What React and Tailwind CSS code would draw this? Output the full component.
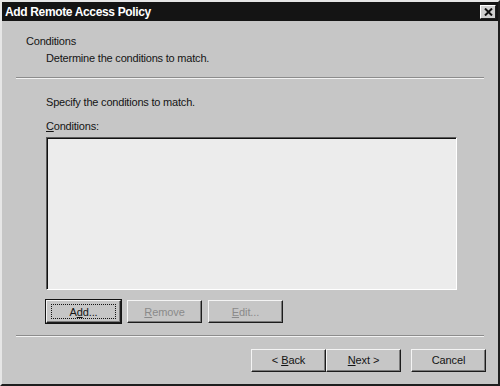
import React from 'react';

const font = { fontFamily: '"Liberation Sans", Arial, sans-serif' };

const Btn = ({ children, disabled, focused, className = '' }) => (
  <div
    className={`w-[75px] h-[23px] border border-t-[#f4f4f4] border-l-[#f4f4f4] border-r-[#1c1c1c] border-b-[#1c1c1c] shadow-[inset_-1px_-1px_0_#7a7a7a] flex items-center justify-center text-[11px] tracking-[-0.1px] ${
      disabled ? 'text-[#8a8a8a]' : 'text-[#141414]'
    } ${focused ? 'outline outline-1 outline-[#141414]' : ''} ${className}`}
  >
    {focused ? (
      <div className="w-[65px] h-[15px] border border-dotted border-[#141414] flex items-center justify-center">
        {children}
      </div>
    ) : (
      children
    )}
  </div>
);

const Sep = () => (
  <div className="mx-[14px] h-[2px] border-t border-t-[#8c8c8c] border-b border-b-[#f2f2f2]" />
);

export default function App() {
  return (
    <div style={font} className="w-[500px] h-[386px] bg-[#c6c6c6] border-l-2 border-t-2 border-l-[#e6e6e6] border-t-[#e6e6e6] border-r-2 border-b-2 border-r-[#1e1e1e] border-b-[#1e1e1e] flex flex-col text-[#141414]">
      {/* title bar */}
      <div className="h-[19px] bg-[#141414] flex items-center justify-between pl-[3px] pr-[2px]">
        <span className="text-white font-bold text-[12px] leading-none tracking-[-0.35px]">Add Remote Access Policy</span>
        <div className="w-[16px] h-[14px] bg-[#d0d0d0] border border-t-white border-l-white border-r-[#202020] border-b-[#202020] flex items-center justify-center">
          <svg width="9" height="8" viewBox="0 0 9 8">
            <path d="M1 0.5 L8 7.5 M8 0.5 L1 7.5" stroke="#111" strokeWidth="2" />
          </svg>
        </div>
      </div>

      {/* header */}
      <div className="h-[56px] pt-[12px] pl-[24px] text-[11px] leading-[17px] tracking-[-0.2px]">
        <div>Conditions</div>
        <div className="pl-[20px]">Determine the conditions to match.</div>
      </div>
      <Sep />

      {/* body */}
      <div className="pl-[44px] pt-[16px] text-[11px] leading-[14px] tracking-[-0.2px]">
        <div>Specify the conditions to match.</div>
        <div className="mt-[10px]">
          <span className="underline underline-offset-1">C</span>onditions:
        </div>
        <div className="mt-[4px] w-[411px] h-[153px] bg-[#ececec] border border-t-[#5a5a5a] border-l-[#5a5a5a] border-r-white border-b-white shadow-[inset_1px_1px_0_#111]" />
        <div className="mt-[10px] flex gap-[6px]">
          <Btn focused>
            A<span className="underline underline-offset-1">d</span>d...
          </Btn>
          <Btn disabled>
            <span className="underline underline-offset-1">R</span>emove
          </Btn>
          <Btn disabled>
            <span className="underline underline-offset-1">E</span>dit...
          </Btn>
        </div>
      </div>

      <div className="mt-[12px]" />
      <Sep />

      {/* footer */}
      <div className="flex justify-end pr-[12px] pt-[12px]">
        <Btn>
          &lt; <span className="underline underline-offset-1 ml-[3px]">B</span>ack
        </Btn>
        <Btn>
          <span className="underline underline-offset-1">N</span>ext &gt;
        </Btn>
        <Btn className="ml-[10px]">Cancel</Btn>
      </div>
    </div>
  );
}
